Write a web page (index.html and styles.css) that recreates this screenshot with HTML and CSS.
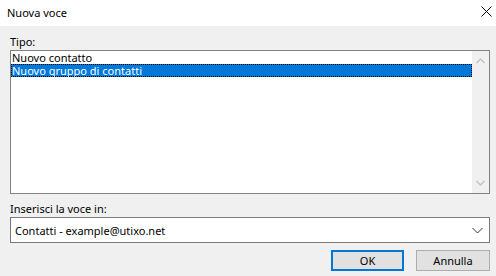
FILE: index.html
```html
<!DOCTYPE html>
<html>
<head>
  <meta charset="UTF-8" />
  <title>Nuova voce</title>
  <link rel="stylesheet" href="styles.css">
</head>
<body>
  <div class="dialog">
    <div class="titlebar">
      <span class="title">Nuova voce</span>
      <svg class="close" width="11" height="11" viewBox="0 0 11 11">
        <path d="M0.5 0.5 L10.5 10.5 M10.5 0.5 L0.5 10.5" stroke="#000" stroke-width="1" fill="none" />
      </svg>
    </div>

    <div class="content">
      <label class="label label-tipo">Tipo:</label>
      <div class="listbox">
        <ul class="items">
          <li class="item">Nuovo contatto</li>
          <li class="item selected">Nuovo gruppo di contatti</li>
        </ul>
        <div class="scrollbar">
          <svg width="17" height="17" viewBox="0 0 17 17">
            <path d="M4.5 10 L8.5 6 L12.5 10" stroke="#c2c2c2" stroke-width="1.4" fill="none" />
          </svg>
          <svg width="17" height="17" viewBox="0 0 17 17">
            <path d="M4.5 7 L8.5 11 L12.5 7" stroke="#c2c2c2" stroke-width="1.4" fill="none" />
          </svg>
        </div>
      </div>

      <label class="label label-folder">Inserisci la voce in:</label>
      <div class="combo">
        <span>Contatti - example@utixo.net</span>
        <svg width="11" height="7" viewBox="0 0 11 7">
          <path d="M0.5 1 L5.5 6 L10.5 1" stroke="#333" stroke-width="1" fill="none" />
        </svg>
      </div>

      <div class="buttons">
        <button type="button" class="btn btn-default">OK</button>
        <button type="button" class="btn">Annulla</button>
      </div>
    </div>
  </div>
</body>
</html>
```

FILE: styles.css
```css
html, body {
  margin: 0;
  padding: 0;
}
body {
  font-family: "Segoe UI", "Noto Sans", "Liberation Sans", sans-serif;
  font-size: 11px;
  color: #000;
  background: #f0f0f0;
}
.dialog {
  width: 496px;
  height: 276px;
  display: flex;
  flex-direction: column;
  background: #f0f0f0;
}
.titlebar {
  height: 26px;
  background: #fff;
  display: flex;
  align-items: center;
  justify-content: space-between;
  padding: 0 4px 0 7px;
}
.title {
  font-size: 11px;
  margin-top: -2px;
}
.close {
  margin-top: -3px;
}
.content {
  padding: 0 6px 0 10px;
  display: flex;
  flex-direction: column;
}
.label {
  display: block;
  line-height: 15px;
}
.label-tipo {
  margin-top: 8px;
  margin-bottom: 1px;
}
.listbox {
  height: 142px;
  border: 1px solid #828282;
  background: #fff;
  display: flex;
}
.items {
  list-style: none;
  margin: 0;
  padding: 0;
  flex: 1;
}
.item {
  height: 13px;
  line-height: 13px;
  padding-left: 1px;
  white-space: nowrap;
}
.selected {
  background: #0078d7;
  color: #fff;
  outline: 1px dotted #000;
  outline-offset: -1px;
}
.scrollbar {
  width: 17px;
  background: #f0f0f0;
  display: flex;
  flex-direction: column;
  justify-content: space-between;
  padding: 2px 0;
}
.label-folder {
  margin-top: 7px;
  margin-bottom: 1px;
}
.combo {
  height: 24px;
  border: 1px solid #7a7a7a;
  background: #fff;
  display: flex;
  align-items: center;
  justify-content: space-between;
  padding: 0 6px 0 4px;
}
.buttons {
  display: flex;
  justify-content: flex-end;
  gap: 12px;
  margin-top: 7px;
}
.btn {
  width: 74px;
  height: 21px;
  font-family: inherit;
  font-size: 11px;
  background: #e1e1e1;
  border: 1px solid #adadad;
  padding: 0;
  margin: 0;
  box-sizing: border-box;
}
.btn-default {
  width: 73px;
  border: 2px solid #0078d7;
}
```
